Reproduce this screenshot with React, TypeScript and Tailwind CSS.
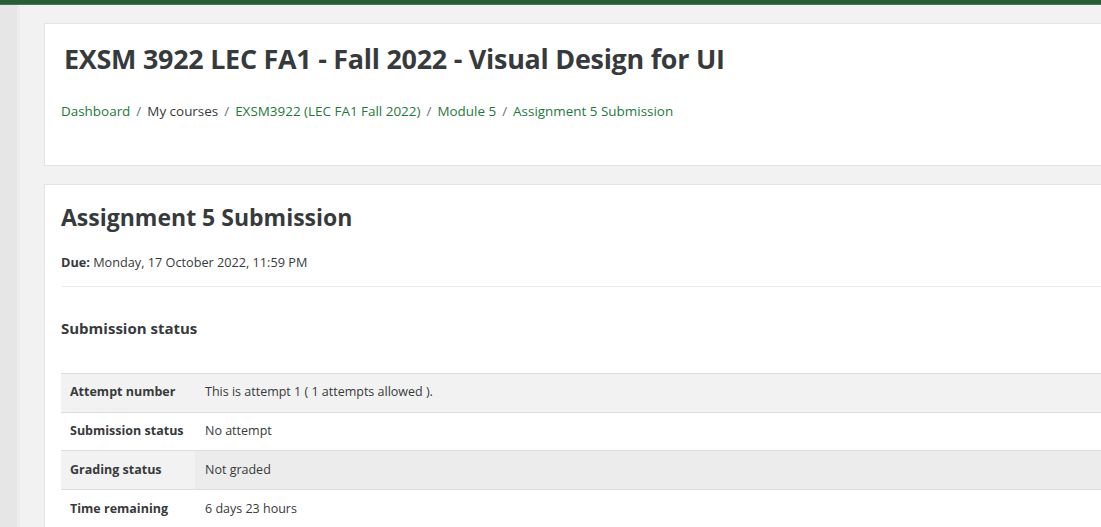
import React from "react";

const rows = [
  { th: "Attempt number", td: "This is attempt 1 ( 1 attempts allowed ).", thBg: "bg-[#f2f2f2]", tdBg: "bg-[#f2f2f2]" },
  { th: "Submission status", td: "No attempt", thBg: "bg-white", tdBg: "bg-white" },
  { th: "Grading status", td: "Not graded", thBg: "bg-[#f2f2f2]", tdBg: "bg-[#ececec]" },
  { th: "Time remaining", td: "6 days 23 hours", thBg: "bg-white", tdBg: "bg-white" },
];

function Sep() {
  return <span className="mx-[6px] text-[#6a737b]">/</span>;
}

export default function App() {
  return (
    <div
      className="w-[1101px] h-[527px] overflow-hidden bg-[#f2f2f2] text-[#373a3c]"
      style={{ fontFamily: '"Open Sans", "Noto Sans", sans-serif' }}
    >
      <div className="h-[5px] bg-[#295d37] border-b border-[#3f7a4f]" />
      <div className="flex h-[522px]">
        <div className="w-[17px] shrink-0 bg-[#e6e6e6]" />
        <div className="w-[3px] shrink-0 bg-[#ededed]" />
        <div className="flex-1 pl-[24px] pt-[18px] min-w-0">
          <div className="w-[1100px] h-[143px] bg-white border border-[#e3e3e3] pl-[19px] pt-[17px]">
            <h1 className="text-[26.9px] font-bold leading-[36px] tracking-[-0.25px]">
              EXSM 3922 LEC FA1 - Fall 2022 - Visual Design for UI
            </h1>
            <nav className="mt-[24px] -ml-[3px] text-[13.45px] leading-[20px] text-[#373a3c]">
              <a className="text-[#1d7a3d]">Dashboard</a>
              <Sep />
              <span>My courses</span>
              <Sep />
              <a className="text-[#1d7a3d]">EXSM3922 (LEC FA1 Fall 2022)</a>
              <Sep />
              <a className="text-[#1d7a3d]">Module 5</a>
              <Sep />
              <a className="text-[#1d7a3d]">Assignment 5 Submission</a>
            </nav>
          </div>
          <div className="mt-[18px] w-[1100px] h-[400px] bg-white border border-[#e3e3e3] pl-[16px] pt-[16px]">
            <h2 className="text-[23px] font-bold leading-[32px]">Assignment 5 Submission</h2>
            <div className="mt-[19px] text-[12.7px] leading-[20px]">
              <span className="font-bold">Due:</span> Monday, 17 October 2022, 11:59 PM
            </div>
            <div className="mt-[14px] border-t border-[#ececec]" />
            <h3 className="mt-[29px] text-[15px] font-bold leading-[24px]">Submission status</h3>
            <table className="mt-[33px] w-full border-collapse text-[12.5px]">
              <tbody>
                {rows.map((r) => (
                  <tr key={r.th} className="border-t border-[#dddddd] h-[38.7px]">
                    <th className={`${r.thBg} w-[134px] text-left font-bold pl-[9px] align-middle`}>{r.th}</th>
                    <td className={`${r.tdBg} pl-[10px] align-middle`}>{r.td}</td>
                  </tr>
                ))}
              </tbody>
            </table>
          </div>
        </div>
      </div>
    </div>
  );
}
